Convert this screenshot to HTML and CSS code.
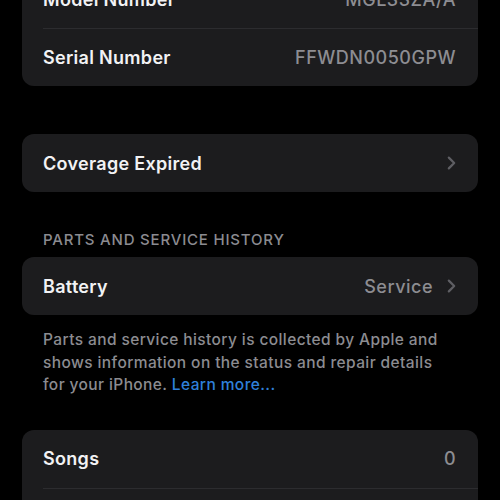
FILE: index.html
```html
<!DOCTYPE html>
<html>
<head>
<meta charset="utf-8">
<link rel="stylesheet" href="styles.css">
</head>
<body>
<div class="page">
  <div class="card first">
    <div class="row"><span class="label">Model Number</span><span class="value">MGL33ZA/A</span></div>
    <div class="row"><span class="label">Serial Number</span><span class="value">FFWDN0050GPW</span></div>
  </div>

  <div class="card gap-card">
    <div class="row"><span class="label">Coverage Expired</span><span class="right"><svg class="chev" width="9" height="14" viewBox="0 0 9 14"><path d="M1.8 1.6 L7.2 7 L1.8 12.4" fill="none" stroke="#5e5e63" stroke-width="2.2" stroke-linecap="round" stroke-linejoin="round"/></svg></span></div>
  </div>

  <div class="section-header">PARTS AND SERVICE HISTORY</div>
  <div class="card">
    <div class="row"><span class="label">Battery</span><span class="right"><span class="value">Service</span><svg class="chev" width="9" height="14" viewBox="0 0 9 14"><path d="M1.8 1.6 L7.2 7 L1.8 12.4" fill="none" stroke="#5e5e63" stroke-width="2.2" stroke-linecap="round" stroke-linejoin="round"/></svg></span></div>
  </div>
  <p class="footer">Parts and service history is collected by Apple and shows information on the status and repair details for your iPhone. <span class="link">Learn more...</span></p>

  <div class="card songs">
    <div class="row"><span class="label">Songs</span><span class="value">0</span></div>
    <div class="row"><span class="label">Videos</span><span class="value">0</span></div>
  </div>
</div>
</body>
</html>
```

FILE: styles.css
```css
html, body {
  margin: 0;
  padding: 0;
  background: #000;
  height: 100%;
  overflow: hidden;
}
body {
  font-family: Inter, "Noto Sans", sans-serif;
  -webkit-font-smoothing: antialiased;
}
.page {
  padding: 0 22px;
  margin-top: -30px;
}
.card {
  background: #1c1c1e;
  border-radius: 12px;
  overflow: hidden;
}
.gap-card {
  margin-top: 48px;
}
.row {
  height: 58px;
  display: flex;
  align-items: center;
  justify-content: space-between;
  padding: 0 22px 0 21px;
  position: relative;
}
.row + .row::before {
  content: "";
  position: absolute;
  top: 0;
  left: 21px;
  right: 0;
  height: 1px;
  background: #2c2c2f;
}
.label {
  color: #f2f2f4;
  font-size: 18px;
  font-weight: 600;
  letter-spacing: 0.3px;
}
.value {
  color: #8d8d92;
  font-size: 18px;
  font-weight: 500;
  letter-spacing: 0.5px;
}
.right {
  display: flex;
  align-items: center;
  gap: 14px;
}
.chev {
  display: block;
}
.section-header {
  color: #8b8b90;
  font-size: 15px;
  font-weight: 500;
  letter-spacing: 0.8px;
  padding: 0 21px;
  margin-top: 39px;
  line-height: 18px;
  margin-bottom: 8px;
}
.footer {
  color: #8c8c91;
  font-size: 15.5px;
  font-weight: 500;
  letter-spacing: 0.4px;
  line-height: 22.5px;
  margin: 14px 0 0;
  padding: 0 21px;
}
.link {
  color: #2f80db;
}
.songs {
  margin-top: 33px;
}
```
